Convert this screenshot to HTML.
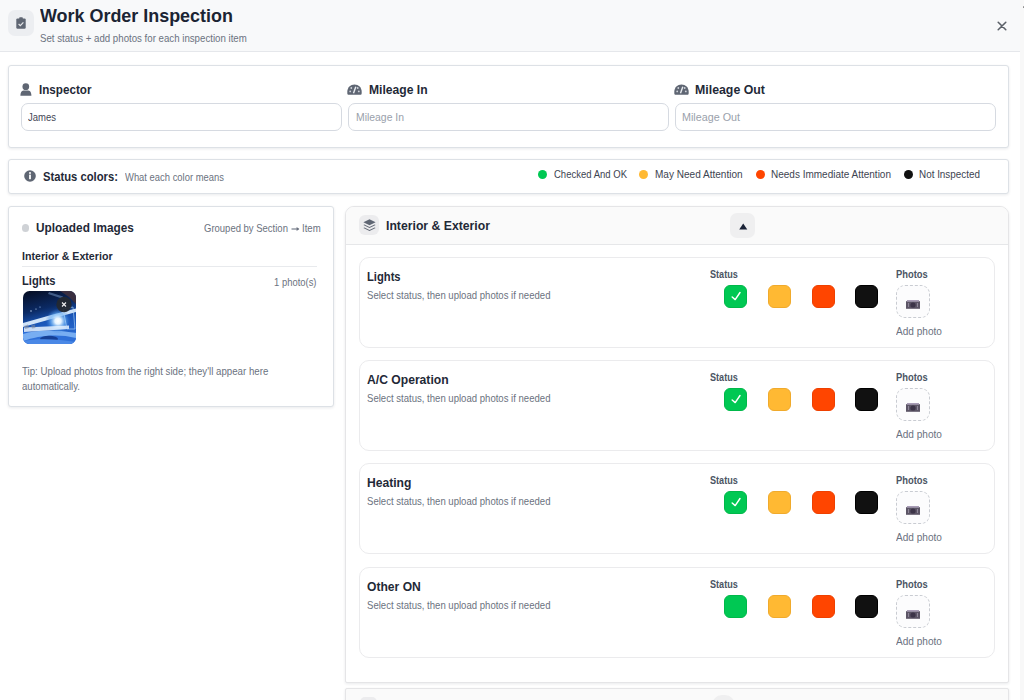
<!DOCTYPE html>
<html><head><meta charset="utf-8">
<style>
*{box-sizing:border-box;margin:0;padding:0}
html,body{width:1024px;height:700px;overflow:hidden;background:#fff;font-family:"Liberation Sans",sans-serif;}
.a{position:absolute}
.t{position:absolute;white-space:nowrap;line-height:1;transform-origin:0 0}
.card{position:absolute;background:#fff;border:1px solid #dde1e6;border-radius:3px;box-shadow:0 1px 3px rgba(16,24,40,.09)}
.inp{position:absolute;top:103px;width:321px;height:28px;border:1px solid #d6dae1;border-radius:7px;background:#fff}
.dot{position:absolute;width:9px;height:9px;border-radius:50%;top:169.5px}
.item{position:absolute;left:359px;width:636px;height:91px;border:1px solid #ebebed;border-radius:10px;background:#fff}
.sq{position:absolute;width:23px;height:23px;border-radius:6px}
</style></head><body>

<div class="a" style="left:0;top:0;width:1020px;height:52px;background:#f8f9fa;border-bottom:1px solid #e5e7eb"></div>
<div class="a" style="left:1020px;top:0;width:4px;height:700px;background:#f8f8f8"></div>
<div class="a" style="left:1022.7px;top:5.8px;width:1.5px;height:2.6px;background:#8a8a8a;border-radius:1px"></div>
<div class="a" style="left:8px;top:10px;width:26px;height:26px;border-radius:7px;background:#eceef1"></div>
<svg class="a" style="left:16px;top:17px" width="10" height="12" viewBox="0 0 10 12">
  <rect x="0.3" y="1.4" width="9.4" height="10.4" rx="1.2" fill="#5f6673"/>
  <rect x="3.2" y="0.2" width="3.6" height="2.4" rx="0.7" fill="#5f6673"/>
  <path d="M2.6 7 L4.3 8.6 L7.4 5.4" stroke="#e6e8eb" stroke-width="1.2" fill="none"/>
</svg>
<div class="t" style="left:40.30px;top:6.61px;font-size:18.65px;font-weight:bold;color:#1b2433;transform:scaleX(0.9615);">Work Order Inspection</div>
<div class="t" style="left:40.00px;top:32.97px;font-size:11.14px;color:#6b7280;transform:scaleX(0.8696);">Set status + add photos for each inspection item</div>
<svg class="a" style="left:997px;top:21px" width="10" height="10" viewBox="0 0 10 10">
  <path d="M1.2 1.2 L8.8 8.8 M8.8 1.2 L1.2 8.8" stroke="#5b6068" stroke-width="1.55" stroke-linecap="round"/>
</svg>
<div class="card" style="left:8px;top:65px;width:1001px;height:83px"></div>
<svg class="a" style="left:20px;top:83px" width="12" height="13" viewBox="0 0 12 13">
  <circle cx="5.8" cy="3.7" r="3.35" fill="#5f6673"/>
  <path d="M0.4 12.8 C0.4 8.6 2.2 7.4 4.2 7.4 L7.6 7.4 C9.6 7.4 11.4 8.6 11.4 12.8 Z" fill="#5f6673"/>
</svg>
<div class="t" style="left:38.70px;top:83.68px;font-size:12.90px;font-weight:bold;color:#1f2937;transform:scaleX(0.9043);">Inspector</div>
<div class="inp" style="left:21px"></div>
<div class="t" style="left:28.00px;top:112.17px;font-size:11.50px;color:#3f4654;transform:scaleX(0.8267);">James</div>
<svg class="a" style="left:347px;top:84px" width="15" height="11" viewBox="0 0 15 11">
  <path d="M1.2 10.8 C0.3 10.8 0.3 9.5 0.3 7.8 C0.3 3.4 3.5 0.4 7.5 0.4 C11.5 0.4 14.7 3.4 14.7 7.8 C14.7 9.5 14.7 10.8 13.8 10.8 Z" fill="#5f6673"/>
  <circle cx="3.2" cy="7.4" r="0.9" fill="#cfd3da"/><circle cx="4.3" cy="4" r="0.9" fill="#cfd3da"/>
  <circle cx="11.8" cy="7.4" r="0.9" fill="#cfd3da"/><circle cx="10.7" cy="4" r="0.9" fill="#cfd3da"/>
  <path d="M6.5 9.2 L8.8 2.8" stroke="#e9ecf0" stroke-width="1.4"/>
</svg>
<div class="t" style="left:368.60px;top:83.68px;font-size:12.90px;font-weight:bold;color:#1f2937;transform:scaleX(0.9397);">Mileage In</div>
<div class="inp" style="left:348px"></div>
<div class="t" style="left:355.50px;top:112.07px;font-size:11.50px;color:#9aa1ab;transform:scaleX(0.9047);">Mileage In</div>
<svg class="a" style="left:674px;top:84px" width="15" height="11" viewBox="0 0 15 11">
  <path d="M1.2 10.8 C0.3 10.8 0.3 9.5 0.3 7.8 C0.3 3.4 3.5 0.4 7.5 0.4 C11.5 0.4 14.7 3.4 14.7 7.8 C14.7 9.5 14.7 10.8 13.8 10.8 Z" fill="#5f6673"/>
  <circle cx="3.2" cy="7.4" r="0.9" fill="#cfd3da"/><circle cx="4.3" cy="4" r="0.9" fill="#cfd3da"/>
  <circle cx="11.8" cy="7.4" r="0.9" fill="#cfd3da"/><circle cx="10.7" cy="4" r="0.9" fill="#cfd3da"/>
  <path d="M6.5 9.2 L8.8 2.8" stroke="#e9ecf0" stroke-width="1.4"/>
</svg>
<div class="t" style="left:695.00px;top:83.68px;font-size:12.90px;font-weight:bold;color:#1f2937;transform:scaleX(0.9575);">Mileage Out</div>
<div class="inp" style="left:675px"></div>
<div class="t" style="left:682.00px;top:112.07px;font-size:11.50px;color:#9aa1ab;transform:scaleX(0.9355);">Mileage Out</div>
<div class="card" style="left:8px;top:159px;width:1001px;height:35px"></div>
<svg class="a" style="left:24px;top:169.5px" width="12" height="12" viewBox="0 0 12 12">
  <circle cx="6" cy="6" r="5.8" fill="#5f6673"/>
  <rect x="5.1" y="4.6" width="1.8" height="4.6" fill="#fff"/>
  <circle cx="6" cy="3" r="1" fill="#fff"/>
</svg>
<div class="t" style="left:43.00px;top:171.12px;font-size:12.15px;font-weight:bold;color:#1f2937;transform:scaleX(0.9259);">Status colors:</div>
<div class="t" style="left:124.60px;top:172.23px;font-size:10.84px;color:#6b7280;transform:scaleX(0.8696);">What each color means</div>
<div class="dot" style="left:538px;background:#00c853"></div>
<div class="t" style="left:553.60px;top:168.83px;font-size:11.30px;color:#3d4451;transform:scaleX(0.8421);">Checked And OK</div>
<div class="dot" style="left:638.5px;background:#ffb933"></div>
<div class="t" style="left:654.70px;top:168.83px;font-size:11.30px;color:#3d4451;transform:scaleX(0.8883);">May Need Attention</div>
<div class="dot" style="left:755.5px;background:#ff4500"></div>
<div class="t" style="left:770.80px;top:168.83px;font-size:11.30px;color:#3d4451;transform:scaleX(0.8845);">Needs Immediate Attention</div>
<div class="dot" style="left:904px;background:#111"></div>
<div class="t" style="left:919.20px;top:168.83px;font-size:11.30px;color:#3d4451;transform:scaleX(0.8749);">Not Inspected</div>
<div class="card" style="left:8px;top:206px;width:326px;height:201px"></div>
<div class="a" style="left:21.5px;top:224px;width:7.5px;height:7.5px;border-radius:50%;background:#cfd2d6"></div>
<div class="t" style="left:35.70px;top:222.08px;font-size:12.78px;font-weight:bold;color:#1f2937;transform:scaleX(0.9259);">Uploaded Images</div>
<div class="t" style="left:203.90px;top:223.17px;font-size:10.90px;color:#6b7280;transform:scaleX(0.8719);">Grouped by Section</div>
<svg class="a" style="left:291px;top:225.5px" width="9" height="6" viewBox="0 0 9 6"><path d="M0.5 3 L7.5 3" stroke="#6b7280" stroke-width="1.1"/><path d="M5.6 0.9 L8.4 3 L5.6 5.1 Z" fill="#6b7280"/></svg>
<div class="t" style="left:302.20px;top:223.17px;font-size:10.90px;color:#6b7280;transform:scaleX(0.8822);">Item</div>
<div class="t" style="left:22.00px;top:250.67px;font-size:11.50px;font-weight:bold;color:#1f2937;transform:scaleX(0.9259);">Interior &amp; Exterior</div>
<div class="a" style="left:22px;top:266px;width:295px;height:1px;background:#e8eaed"></div>
<div class="t" style="left:22.00px;top:274.89px;font-size:12.06px;font-weight:bold;color:#1f2937;transform:scaleX(0.9259);">Lights</div>
<div class="t" style="left:273.80px;top:276.71px;font-size:10.86px;color:#6b7280;transform:scaleX(0.8696);">1 photo(s)</div>
<svg class="a" style="left:22.5px;top:291px" width="53" height="53" viewBox="0 0 53 53">
  <defs>
    <clipPath id="rc"><rect x="0" y="0" width="53" height="53" rx="6.5"/></clipPath>
    <linearGradient id="bgG" x1="0" y1="0" x2="0.25" y2="1">
      <stop offset="0" stop-color="#050c20"/><stop offset="0.4" stop-color="#0b2a64"/><stop offset="0.65" stop-color="#1a56b8"/><stop offset="1" stop-color="#2a6ad0"/>
    </linearGradient>
    <radialGradient id="glow" cx="0.5" cy="0.5" r="0.5">
      <stop offset="0" stop-color="#ffffff"/><stop offset="0.25" stop-color="#e6f4ff"/><stop offset="0.6" stop-color="#6db4f8" stop-opacity="0.65"/><stop offset="1" stop-color="#2a70d0" stop-opacity="0"/>
    </radialGradient>
  </defs>
  <g clip-path="url(#rc)">
    <rect x="0" y="0" width="53" height="53" fill="url(#bgG)"/>
    <path d="M37 0 L53 0 L53 13 L46 6 Z" fill="#3a2f40"/>
    <path d="M26 1 L40 5.5 L39 7.5 L25 3 Z" fill="#6d8fc0" opacity="0.55"/>
    <circle cx="8" cy="20" r="0.7" fill="#cfe6ff"/><circle cx="13" cy="18" r="0.6" fill="#cfe6ff"/><circle cx="17" cy="16" r="0.6" fill="#9cc8ff"/>
    <path d="M0 41 L53 41 L53 53 L0 53 Z" fill="#2f70d8"/>
    <path d="M0 43 C12 39 30 38 53 42 L53 47 C34 42 14 45 0 50 Z" fill="#78aef2"/>
    <ellipse cx="26" cy="48" rx="9" ry="3.2" fill="#164096"/>
    <path d="M0 50 C14 47 36 48 53 51 L53 53 L0 53 Z" fill="#4a88e6"/>
    <path d="M0 32 L30 23.5 L53 17.5 L53 21 L32 27 L0 36 Z" fill="#dff0ff" opacity="0.92"/>
    <circle cx="35" cy="30" r="12.5" fill="url(#glow)"/>
    <path d="M1 36.5 L46 34.5 L46 38 L1 41 Z" fill="#e8f3ff" opacity="0.85"/>
    <path d="M1 35 L5 33.5 L6 37 L2 38 Z M8 34.5 L12 33.5 L12.5 37 L9 37.5 Z" fill="#7d889e" opacity="0.6"/>
    <path d="M40 18 L50 16 L52 38 L44 38 Z" fill="none" stroke="#b4dcff" stroke-width="1" opacity="0.6"/>
    <circle cx="41" cy="13.5" r="7.7" fill="#25292f" opacity="0.93"/>
    <path d="M39 11.5 L43 15.5 M43 11.5 L39 15.5" stroke="#f2f2f2" stroke-width="1.1"/>
  </g>
</svg>
<div class="t" style="left:22.00px;top:365.95px;font-size:11.17px;color:#6b7280;transform:scaleX(0.8696);">Tip: Upload photos from the right side; they&#x27;ll appear here</div>
<div class="t" style="left:22.00px;top:380.55px;font-size:11.04px;color:#6b7280;transform:scaleX(0.8696);">automatically.</div>
<div class="card" style="left:345.4px;top:206px;width:663.6px;height:477px;border-radius:9px 9px 2px 2px;overflow:hidden;border-color:#e5e5e7"><div class="a" style="left:0;top:0;width:100%;height:38px;background:#fafafa;border-bottom:1px solid #e6e7e9"></div></div>
<div class="a" style="left:359px;top:215px;width:20px;height:20px;border-radius:6px;background:#ececee"></div>
<svg class="a" style="left:362.5px;top:218.5px" width="13" height="13" viewBox="0 0 13 13">
  <path d="M6.5 0.3 L12.6 3.2 L6.5 6.2 L0.4 3.2 Z" fill="#5f6673"/>
  <path d="M1.4 5.5 L6.5 8.0 L11.6 5.5 L12.6 6.1 L6.5 9.1 L0.4 6.1 Z" fill="#5f6673"/>
  <path d="M1.4 8.4 L6.5 10.9 L11.6 8.4 L12.6 9.0 L6.5 12.0 L0.4 9.0 Z" fill="#5f6673"/>
</svg>
<div class="t" style="left:386.00px;top:219.42px;font-size:13.21px;font-weight:bold;color:#1f2937;transform:scaleX(0.9259);">Interior &amp; Exterior</div>
<div class="a" style="left:730px;top:213px;width:25px;height:25px;border-radius:7px;background:#efeff0"></div>
<svg class="a" style="left:738.5px;top:222.5px" width="9" height="7" viewBox="0 0 9 7"><path d="M4.2 0.4 L8.3 6.6 L0.2 6.6 Z" fill="#1a2236"/></svg>
<div class="item" style="top:257px"></div>
<div class="t" style="left:367.40px;top:270.00px;font-size:13.00px;font-weight:bold;color:#1f2937;transform:scaleX(0.8618);">Lights</div>
<div class="t" style="left:367.40px;top:290.18px;font-size:11.01px;color:#6b7280;transform:scaleX(0.8696);">Select status, then upload photos if needed</div>
<div class="t" style="left:709.70px;top:269.68px;font-size:10.30px;font-weight:bold;color:#4b5563;transform:scaleX(0.8832);">Status</div>
<div class="sq" style="left:724.0px;top:284.6px;background:#00c853;border:1px solid #00b84a"></div>
<div class="sq" style="left:767.8px;top:284.6px;background:#ffb933;border:1px solid #f0aa2c"></div>
<div class="sq" style="left:811.6px;top:284.6px;background:#ff4500;border:1px solid #ee4000"></div>
<div class="sq" style="left:855.4px;top:284.6px;background:#111111;border:1px solid #000"></div>
<svg class="a" style="left:730.5px;top:290.6px" width="10" height="10" viewBox="0 0 10 10"><path d="M1.2 6.0 L4.2 8.6 L9.0 1.5" stroke="#fff" stroke-width="1.45" fill="none" stroke-linecap="round" stroke-linejoin="round"/></svg>
<div class="t" style="left:896.40px;top:269.68px;font-size:10.30px;font-weight:bold;color:#4b5563;transform:scaleX(0.9083);">Photos</div>
<div class="a" style="left:896px;top:284.6px;width:34px;height:33px;border:1px dashed #c9ccd2;border-radius:9px;background:#fcfcfd"></div>
<svg class="a" style="left:906px;top:299.6px" width="14" height="9" viewBox="0 0 14 9"><rect x="0" y="1.2" width="14" height="7.6" fill="#5c5566"/><rect x="1" y="0" width="12" height="1.6" fill="#a89cb6"/><circle cx="7" cy="5" r="2.6" fill="#3c3448"/><rect x="2" y="3" width="1" height="4" fill="#8d8598"/><rect x="11" y="3" width="1" height="4" fill="#8d8598"/></svg>
<div class="t" style="left:896.20px;top:325.50px;font-size:11.58px;color:#6b7280;transform:scaleX(0.8696);">Add photo</div>
<div class="item" style="top:360px"></div>
<div class="t" style="left:367.40px;top:373.00px;font-size:13.00px;font-weight:bold;color:#1f2937;transform:scaleX(0.9337);">A/C Operation</div>
<div class="t" style="left:367.40px;top:393.18px;font-size:11.01px;color:#6b7280;transform:scaleX(0.8696);">Select status, then upload photos if needed</div>
<div class="t" style="left:709.70px;top:372.68px;font-size:10.30px;font-weight:bold;color:#4b5563;transform:scaleX(0.8832);">Status</div>
<div class="sq" style="left:724.0px;top:387.6px;background:#00c853;border:1px solid #00b84a"></div>
<div class="sq" style="left:767.8px;top:387.6px;background:#ffb933;border:1px solid #f0aa2c"></div>
<div class="sq" style="left:811.6px;top:387.6px;background:#ff4500;border:1px solid #ee4000"></div>
<div class="sq" style="left:855.4px;top:387.6px;background:#111111;border:1px solid #000"></div>
<svg class="a" style="left:730.5px;top:393.6px" width="10" height="10" viewBox="0 0 10 10"><path d="M1.2 6.0 L4.2 8.6 L9.0 1.5" stroke="#fff" stroke-width="1.45" fill="none" stroke-linecap="round" stroke-linejoin="round"/></svg>
<div class="t" style="left:896.40px;top:372.68px;font-size:10.30px;font-weight:bold;color:#4b5563;transform:scaleX(0.9083);">Photos</div>
<div class="a" style="left:896px;top:387.6px;width:34px;height:33px;border:1px dashed #c9ccd2;border-radius:9px;background:#fcfcfd"></div>
<svg class="a" style="left:906px;top:402.6px" width="14" height="9" viewBox="0 0 14 9"><rect x="0" y="1.2" width="14" height="7.6" fill="#5c5566"/><rect x="1" y="0" width="12" height="1.6" fill="#a89cb6"/><circle cx="7" cy="5" r="2.6" fill="#3c3448"/><rect x="2" y="3" width="1" height="4" fill="#8d8598"/><rect x="11" y="3" width="1" height="4" fill="#8d8598"/></svg>
<div class="t" style="left:896.20px;top:428.50px;font-size:11.58px;color:#6b7280;transform:scaleX(0.8696);">Add photo</div>
<div class="item" style="top:463px"></div>
<div class="t" style="left:367.40px;top:476.00px;font-size:13.00px;font-weight:bold;color:#1f2937;transform:scaleX(0.9315);">Heating</div>
<div class="t" style="left:367.40px;top:496.18px;font-size:11.01px;color:#6b7280;transform:scaleX(0.8696);">Select status, then upload photos if needed</div>
<div class="t" style="left:709.70px;top:475.68px;font-size:10.30px;font-weight:bold;color:#4b5563;transform:scaleX(0.8832);">Status</div>
<div class="sq" style="left:724.0px;top:490.6px;background:#00c853;border:1px solid #00b84a"></div>
<div class="sq" style="left:767.8px;top:490.6px;background:#ffb933;border:1px solid #f0aa2c"></div>
<div class="sq" style="left:811.6px;top:490.6px;background:#ff4500;border:1px solid #ee4000"></div>
<div class="sq" style="left:855.4px;top:490.6px;background:#111111;border:1px solid #000"></div>
<svg class="a" style="left:730.5px;top:496.6px" width="10" height="10" viewBox="0 0 10 10"><path d="M1.2 6.0 L4.2 8.6 L9.0 1.5" stroke="#fff" stroke-width="1.45" fill="none" stroke-linecap="round" stroke-linejoin="round"/></svg>
<div class="t" style="left:896.40px;top:475.68px;font-size:10.30px;font-weight:bold;color:#4b5563;transform:scaleX(0.9083);">Photos</div>
<div class="a" style="left:896px;top:490.6px;width:34px;height:33px;border:1px dashed #c9ccd2;border-radius:9px;background:#fcfcfd"></div>
<svg class="a" style="left:906px;top:505.6px" width="14" height="9" viewBox="0 0 14 9"><rect x="0" y="1.2" width="14" height="7.6" fill="#5c5566"/><rect x="1" y="0" width="12" height="1.6" fill="#a89cb6"/><circle cx="7" cy="5" r="2.6" fill="#3c3448"/><rect x="2" y="3" width="1" height="4" fill="#8d8598"/><rect x="11" y="3" width="1" height="4" fill="#8d8598"/></svg>
<div class="t" style="left:896.20px;top:531.50px;font-size:11.58px;color:#6b7280;transform:scaleX(0.8696);">Add photo</div>
<div class="item" style="top:567px"></div>
<div class="t" style="left:367.40px;top:580.00px;font-size:13.00px;font-weight:bold;color:#1f2937;transform:scaleX(0.9311);">Other ON</div>
<div class="t" style="left:367.40px;top:600.18px;font-size:11.01px;color:#6b7280;transform:scaleX(0.8696);">Select status, then upload photos if needed</div>
<div class="t" style="left:709.70px;top:579.68px;font-size:10.30px;font-weight:bold;color:#4b5563;transform:scaleX(0.8832);">Status</div>
<div class="sq" style="left:724.0px;top:594.6px;background:#00c853;border:1px solid #00b84a"></div>
<div class="sq" style="left:767.8px;top:594.6px;background:#ffb933;border:1px solid #f0aa2c"></div>
<div class="sq" style="left:811.6px;top:594.6px;background:#ff4500;border:1px solid #ee4000"></div>
<div class="sq" style="left:855.4px;top:594.6px;background:#111111;border:1px solid #000"></div>
<div class="t" style="left:896.40px;top:579.68px;font-size:10.30px;font-weight:bold;color:#4b5563;transform:scaleX(0.9083);">Photos</div>
<div class="a" style="left:896px;top:594.6px;width:34px;height:33px;border:1px dashed #c9ccd2;border-radius:9px;background:#fcfcfd"></div>
<svg class="a" style="left:906px;top:609.6px" width="14" height="9" viewBox="0 0 14 9"><rect x="0" y="1.2" width="14" height="7.6" fill="#5c5566"/><rect x="1" y="0" width="12" height="1.6" fill="#a89cb6"/><circle cx="7" cy="5" r="2.6" fill="#3c3448"/><rect x="2" y="3" width="1" height="4" fill="#8d8598"/><rect x="11" y="3" width="1" height="4" fill="#8d8598"/></svg>
<div class="t" style="left:896.20px;top:635.50px;font-size:11.58px;color:#6b7280;transform:scaleX(0.8696);">Add photo</div>
<div class="card" style="left:345.4px;top:688px;width:663.6px;height:40px;border-radius:2px;background:#fafafa;border-color:#e5e5e7"></div>
<div class="a" style="left:360px;top:697px;width:17px;height:10px;border-radius:6px;background:#ececee"></div>
<div class="a" style="left:712px;top:695px;width:23px;height:10px;border-radius:10px 10px 0 0;background:#efeff0"></div>
</body></html>
